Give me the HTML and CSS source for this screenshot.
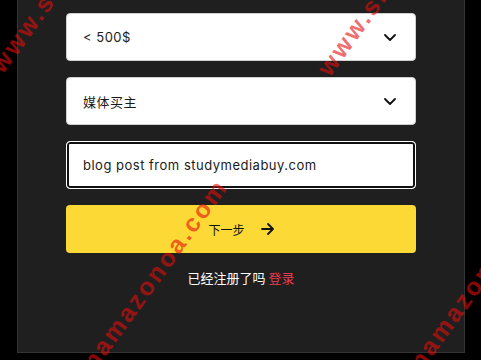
FILE: index.html
```html
<!DOCTYPE html>
<html lang="zh">
<head>
<meta charset="utf-8">
<title>Form</title>
<link rel="stylesheet" href="styles.css">
</head>
<body>
<div class="page">
  <div class="panel">
    <div class="form">
      <div class="field select">
        <span class="value">&lt; 500$</span>
        <svg class="chev" width="12" height="7" viewBox="0 0 12 7"><path d="M1 1 L6 6 L11 1" fill="none" stroke="#111" stroke-width="1.8" stroke-linecap="round" stroke-linejoin="round"/></svg>
      </div>
      <div class="field select">
        <span class="value">媒体买主</span>
        <svg class="chev" width="12" height="7" viewBox="0 0 12 7"><path d="M1 1 L6 6 L11 1" fill="none" stroke="#111" stroke-width="1.8" stroke-linecap="round" stroke-linejoin="round"/></svg>
      </div>
      <div class="field input focused">
        <span class="value">blog post from studymediabuy.com</span>
      </div>
      <button class="btn"><span>下一步</span>
        <svg width="13" height="12" viewBox="0 0 13 12"><path d="M1 6 H12 M7 1 L12 6 L7 11" fill="none" stroke="#111" stroke-width="1.8" stroke-linecap="round" stroke-linejoin="round"/></svg>
      </button>
      <p class="login">已经注册了吗 <a class="link">登录</a></p>
    </div>
  </div>
  <div class="wm-layer">
    <span class="wm wm1">www.sinamazonoa.com</span>
    <span class="wm wm2">www.sinamazonoa.com</span>
    <span class="wm wm3">www.sinamazonoa.com</span>
    <span class="wm wm4">www.sinamazonoa.com</span>
  </div>
</div>
</body>
</html>
```
FILE: styles.css
```css
html, body {
  margin: 0;
  padding: 0;
  background: #000;
}
.page {
  position: relative;
  width: 481px;
  height: 360px;
  overflow: hidden;
  font-family: "Inter", "Noto Sans CJK SC", sans-serif;
}
.panel {
  margin-left: 17px;
  width: 448px;
  height: 353px;
  box-sizing: border-box;
  background: #1f1f1f;
  border: 1px solid #343434;
  border-top: 0;
  padding: 13px 48px 0;
}
.form {
  display: flex;
  flex-direction: column;
  gap: 16px;
}
.field {
  height: 48px;
  box-sizing: border-box;
  background: #fff;
  border: 1px solid #cfcfcf;
  border-radius: 4px;
  display: flex;
  align-items: center;
  justify-content: space-between;
  padding: 0 19px 0 16px;
  font-size: 13px;
  color: #1a1a1a;
}
.value {
  font-family: "Inter", "Noto Sans CJK SC", sans-serif;
  letter-spacing: 0.5px;
}
.field.focused {
  border: 1px solid #fff;
  box-shadow: inset 0 0 0 2px #111;
}
.btn {
  height: 48px;
  border: 0;
  border-radius: 4px;
  background: #fdd935;
  display: flex;
  align-items: center;
  justify-content: center;
  gap: 16px;
  font-family: "Noto Sans CJK SC", sans-serif;
  font-size: 12px;
  color: #111;
  padding: 0;
}
.login {
  margin: 0;
  text-align: center;
  font-family: "Noto Sans CJK SC", sans-serif;
  font-size: 13px;
  line-height: 18px;
  color: #fff;
}
.link {
  color: #ea3b52;
}
.wm-layer {
  position: absolute;
  left: 0;
  top: 0;
  width: 481px;
  height: 360px;
  pointer-events: none;
}
.wm {
  position: absolute;
  white-space: nowrap;
  font-family: "Liberation Sans", sans-serif;
  font-weight: bold;
  font-size: 25px;
  line-height: 25px;
  letter-spacing: 2.5px;
  color: rgba(229, 13, 13, 0.6);
  transform: rotate(-54deg);
  transform-origin: 0 100%;
}
.wm1 { left: 6px; top: 52px; }
.wm2 { left: 333px; top: 55px; }
.wm3 { left: 39px; top: 430px; }
.wm4 { left: 366px; top: 430px; }
```
